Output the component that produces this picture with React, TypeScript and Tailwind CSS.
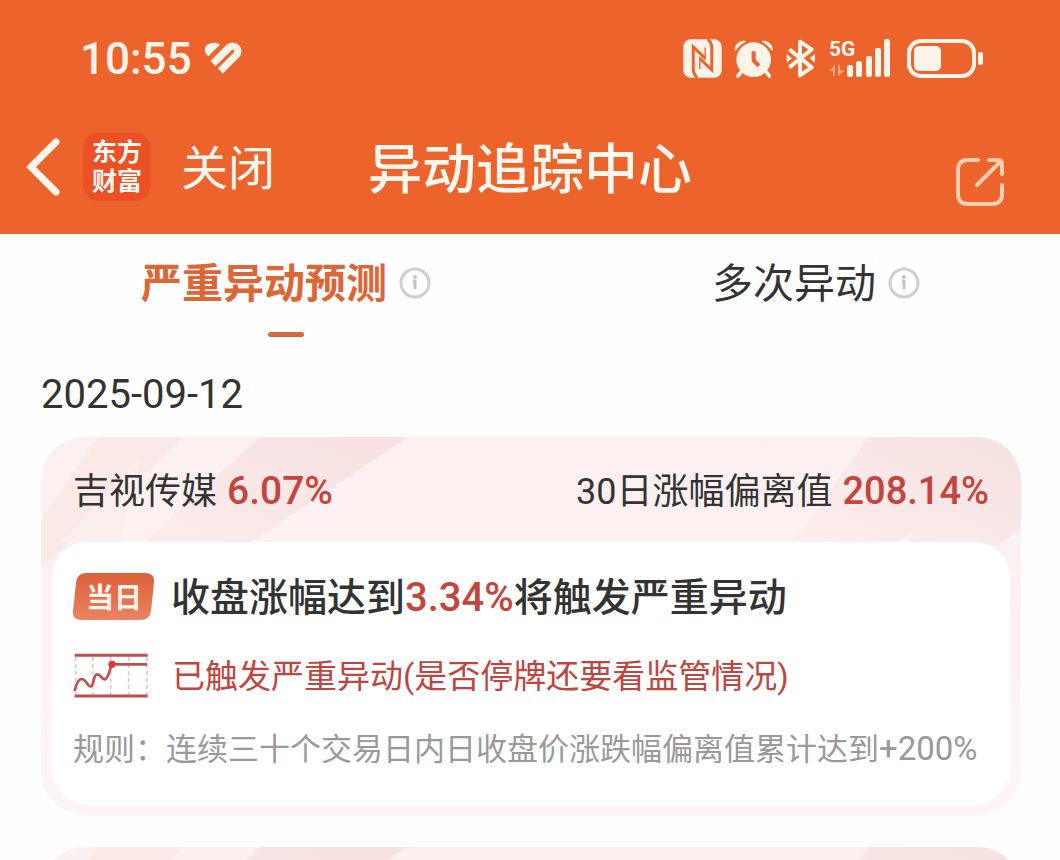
import React from 'react';

type StockCardProps = {
    id: string;
    name?: string;
    change?: string;
    deviationLabel?: string;
    deviation?: string;
    children?: React.ReactNode;
};

type TabProps = {
    label: string;
    active?: boolean;
};

const HeartIcon = () => (
    <svg className="h-[32px] w-[38px]" viewBox="15 17 114 96" fill="none" aria-hidden="true">
        <path d="M28 60C15 50 15 36 22 28C32 17 52 17 63 25Z" fill="#fff3ea" />
        <path d="M42 82L90 34A15 15 0 0 1 112 56L64 104" stroke="#fff3ea" strokeWidth="22" />
    </svg>
);

const NfcIcon = () => (
    <svg className="h-[39px] w-[39px]" viewBox="11 14 118 118" fill="none" aria-hidden="true">
        <rect x="12" y="15" width="116" height="116" rx="22" fill="#fff3ea" />
        <path d="M54 131Q42 120 42 104V38L78 72" stroke="#ec632b" strokeWidth="9" />
        <path d="M86 14Q98 25 98 41V107L62 73" stroke="#ec632b" strokeWidth="9" />
        <path d="M78 78V40M62 67V105" stroke="#ec632b" strokeWidth="4" />
    </svg>
);

const AlarmIcon = () => (
    <svg className="h-[39px] w-[39px]" viewBox="204 57 117 117" fill="none" aria-hidden="true">
        <path d="M224 157L216 168M302 157L310 168" stroke="#fff3ea" strokeWidth="11" strokeLinecap="round" />
        <circle cx="263" cy="119" r="52" fill="#fff3ea" />
        <path d="M208 91C205 76 219 62 238 64Q220 74 208 91ZM318 91C321 76 307 62 288 64Q306 74 318 91Z" fill="#fff3ea" stroke="#fff3ea" strokeWidth="3" strokeLinejoin="round" />
        <path d="M263 94V122L279 137" stroke="#ec632b" strokeWidth="12" />
    </svg>
);

const BluetoothIcon = () => (
    <svg className="h-[39px] w-[32px]" viewBox="358 57 96 117" fill="none" aria-hidden="true">
        <path d="M371 88L438 142L403 166V65L438 88L371 142" stroke="#fff3ea" strokeWidth="12" strokeLinejoin="round" />
        <path d="M363 102L379 115L363 128ZM448 102L432 115L448 128Z" fill="#fff3ea" />
    </svg>
);

const SignalIcon = () => (
    <div className="relative mr-1 h-[42px] w-[62px]">
        <span className="absolute top-0 left-0 text-[21px] leading-6 font-bold">5G</span>
        <svg className="h-full w-full" viewBox="0 0 62 42" aria-hidden="true">
            <path d="M0 34L6 28V39H4V34ZM9 28H11V33H16L9 39Z" fill="#f8a480" />
            <g fill="#fff3ea">
                <rect x="18" y="28" width="6" height="12" rx="2" />
                <rect x="27" y="24" width="6" height="16" rx="2" />
                <rect x="37" y="19" width="6" height="21" rx="2" />
                <rect x="46" y="11" width="6" height="29" rx="2" />
                <rect x="55" y="2" width="6" height="38" rx="2" />
            </g>
        </svg>
    </div>
);

const BatteryIcon = () => (
    <svg className="h-[39px] w-[77px]" viewBox="0 0 77 39" fill="none" aria-hidden="true">
        <rect x="2" y="2" width="65" height="35" rx="12" stroke="#fff3ea" strokeWidth="4" />
        <rect x="7" y="7" width="27" height="25" rx="5" fill="#fff3ea" />
        <rect x="71" y="13" width="5" height="13" rx="2" fill="#fff3ea" />
    </svg>
);

const InfoIcon = () => (
    <svg className="h-8 w-8" viewBox="0 0 32 32" fill="none" aria-hidden="true">
        <circle cx="16" cy="16" r="14" stroke="#cfcfcf" strokeWidth="3" />
        <circle cx="16" cy="10" r="2" fill="#c4c4c4" />
        <path d="M14 14H16V22" stroke="#c4c4c4" strokeWidth="3" strokeLinejoin="round" />
    </svg>
);

const TrendIcon = () => (
    <svg className="h-[46px] w-[76px]" viewBox="38 280 228 138" fill="none" aria-hidden="true">
        <path d="M46 292V405M97 292V405M151 292V405M205 292V405M260 292V405" stroke="#e7c4c2" strokeWidth="5" strokeDasharray="12 9" />
        <path d="M43 287H262M43 409H262" stroke="#bf4f4b" strokeWidth="9" />
        <path d="M43 394C48 371 55 357 65 358C77 359 83 384 92 380C102 375 98 345 110 344C121 343 125 361 134 359C144 356 148 332 154 314H260" stroke="#bf4f4b" strokeWidth="8" />
        <circle cx="155" cy="314" r="11" fill="#d93b35" />
    </svg>
);

const StatusBar = () => (
    <div className="flex h-[116px] items-center justify-between pr-[76px] pl-20 text-[#fff3ea]">
        <div className="flex items-center gap-3">
            <span className="pt-0.5 text-[44px] leading-none font-medium">10:55</span>
            <HeartIcon />
        </div>
        <div className="flex items-center gap-3">
            <NfcIcon />
            <AlarmIcon />
            <BluetoothIcon />
            <SignalIcon />
            <BatteryIcon />
        </div>
    </div>
);

const NavBar = () => (
    <div className="grid h-[118px] grid-cols-[1fr_auto_1fr] items-center pr-14 pb-4 pl-6 text-[#fff6ee]">
        <div className="flex items-center">
            <button type="button" aria-label="返回">
                <svg className="h-[58px] w-9" viewBox="0 0 36 58" fill="none">
                    <path d="M32 4L7 29L32 54" stroke="currentColor" strokeWidth="7" strokeLinecap="round" />
                </svg>
            </button>
            <div className="ml-[23px] flex h-[68px] w-[68px] flex-col items-center justify-center rounded-2xl bg-[#eb5027] text-[25px] leading-[29px] font-bold">
                <span>东方</span>
                <span>财富</span>
            </div>
            <button type="button" className="ml-[30px] pt-1 text-[47px] leading-[60px]">关闭</button>
        </div>
        <h1 className="-mr-8 pt-2 text-[54px] leading-[70px] font-medium">异动追踪中心</h1>
        <button type="button" aria-label="分享" className="justify-self-end pt-[30px]">
            <svg className="h-12 w-12" viewBox="0 0 48 48" fill="none" stroke="#ffceae" strokeWidth="4" strokeLinecap="round" strokeLinejoin="round">
                <path d="M22 2H12Q2 2 2 12V36Q2 46 12 46H36Q46 46 46 36V27" />
                <path d="M33 2H42Q46 2 46 6V16M44 4L21 27" />
            </svg>
        </button>
    </div>
);

const Tab: React.FC<TabProps> = ({ label, active }) => (
    <button type="button" role="tab" aria-selected={!!active} className="flex flex-col items-center gap-6 pl-[42px]">
        <span className="flex items-center gap-3">
            <span className={`pt-0.5 text-[41px] leading-[48px] ${active ? 'font-bold text-[#dd6636]' : 'text-[#333]'}`}>{label}</span>
            <InfoIcon />
        </span>
        {active && <span className="h-[5px] w-9 rounded-full bg-[#d8683e]" />}
    </button>
);

const CardPattern = ({ id }: { id: string }) => (
    <svg className="absolute inset-x-0 top-0 h-[130px] w-full" viewBox="0 0 980 130" preserveAspectRatio="none" aria-hidden="true">
        <defs>
            <linearGradient id={`${id}-left`} x1="1" y1="0" x2="0" y2="1">
                <stop offset="0" stopColor="#f7e1e0" />
                <stop offset="1" stopColor="#fbecec" />
            </linearGradient>
            <linearGradient id={`${id}-right`} x1="1" y1="0" x2="0" y2="1">
                <stop offset="0" stopColor="#f6e1e0" />
                <stop offset="1" stopColor="#fbefee" />
            </linearGradient>
        </defs>
        <path d="M57 0H143L10 122L0 130V83Z" fill="#fae9e7" />
        <path d="M100 20L79 105H20L10 115Z" fill="#fbefee" />
        <path d="M219 0H366L211 105H104Z" fill={`url(#${id}-left)`} />
        <path d="M828 0H980V91L956 109L930 105H752Z" fill={`url(#${id}-right)`} />
        <path d="M856 105L870 96V105Z" fill="#fdf1f0" />
    </svg>
);

const StockCard: React.FC<StockCardProps> = ({ id, name, change, deviationLabel, deviation, children }) => (
    <article className="relative overflow-hidden rounded-[44px] bg-linear-to-b from-[#fbf0ef] to-[#fff5f4] px-[11px] pb-2.5">
        <CardPattern id={id} />
        <header className="relative flex h-[105px] items-center justify-between px-[21px] pt-1 text-[36px] text-[#333]">
            <div className="flex items-baseline gap-2.5">
                <h2>{name}</h2>
                <span className="text-[39px] font-medium text-[#c4453d]">{change}</span>
            </div>
            <div className="flex items-baseline gap-2.5">
                <span>{deviationLabel}</span>
                <span className="text-[38px] font-medium text-[#c4453d]">{deviation}</span>
            </div>
        </header>
        <div className="relative flex min-h-[263px] flex-col gap-[27px] rounded-[36px] bg-white px-[21px] pt-[27px] pb-[33px]">
            {children}
        </div>
    </article>
);

export default function App() {
    return (
        <div className="h-screen overflow-hidden bg-[#fefefe] font-[Roboto,'Noto_Sans_CJK_SC',sans-serif] whitespace-nowrap">
            <header className="bg-[#ec632b]">
                <StatusBar />
                <NavBar />
            </header>
            <div role="tablist" className="grid grid-cols-2 items-start pt-6">
                <Tab label="严重异动预测" active />
                <Tab label="多次异动" />
            </div>
            <main className="pr-[39px] pl-[41px]">
                <time dateTime="2025-09-12" className="mt-9 block text-[40px] leading-[44px] text-[#333]">2025-09-12</time>
                <div className="mt-5 flex flex-col gap-8">
                    <StockCard id="jishi" name="吉视传媒" change="6.07%" deviationLabel="30日涨幅偏离值" deviation="208.14%">
                        <div className="flex h-14 items-center gap-4">
                            <div className="relative flex h-12 w-[82px] items-center justify-center">
                                <svg className="absolute inset-0 h-full w-full" viewBox="0 0 82 48" aria-hidden="true">
                                    <defs>
                                        <linearGradient id="today" x1="0" y1="0" x2="0" y2="1">
                                            <stop offset="0" stopColor="#dc6037" />
                                            <stop offset="1" stopColor="#e98362" />
                                        </linearGradient>
                                    </defs>
                                    <path d="M13 0H72Q82 0 81 10L78 38Q77 47 67 47H9Q-1 47 0 38L3 10Q4 0 13 0Z" fill="url(#today)" />
                                </svg>
                                <span className="relative pt-1 text-[28px] leading-none font-bold text-[#fff3ea]">当日</span>
                            </div>
                            <p className="pt-0.5 text-[39px] leading-[56px] font-medium text-[#333]">
                                收盘涨幅达到<span className="text-[40px] text-[#c4453d]">3.34%</span>将触发严重异动
                            </p>
                        </div>
                        <div className="flex h-12 items-center gap-[23px]">
                            <TrendIcon />
                            <p className="pt-0.5 text-[33px] leading-[48px] text-[#bf453f]">已触发严重异动(是否停牌还要看监管情况)</p>
                        </div>
                        <p className="text-[31px] leading-[44px] text-[#999]">
                            规则：连续三十个交易日内日收盘价涨跌幅偏离值累计达到<span className="text-[33px]">+200%</span>
                        </p>
                    </StockCard>
                    <StockCard id="next" />
                </div>
            </main>
        </div>
    );
}
